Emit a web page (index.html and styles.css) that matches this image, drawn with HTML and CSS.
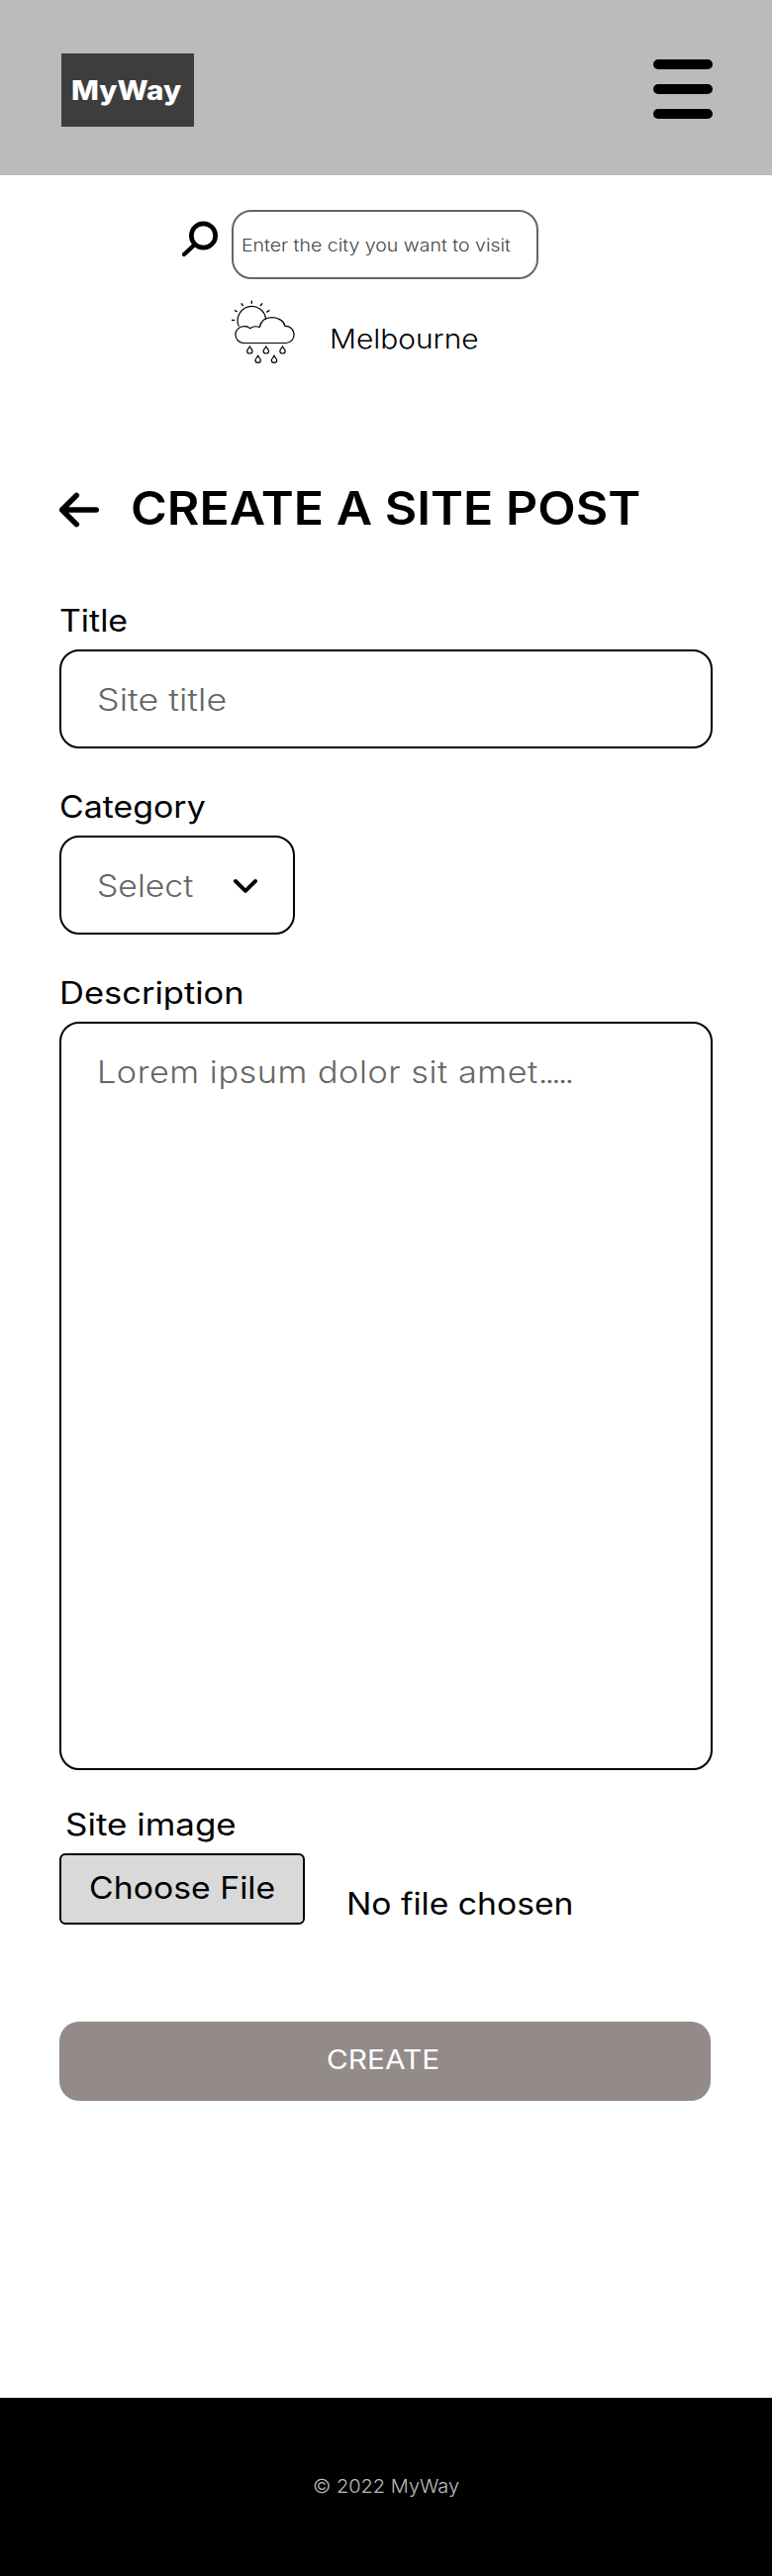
FILE: index.html
```html
<!DOCTYPE html>
<html lang="en">
<head>
<meta charset="utf-8">
<title>MyWay – Create a site post</title>
<link rel="stylesheet" href="styles.css">
</head>
<body>
<header class="header">
  <a class="logo"><span class="wide logo-text">MyWay</span></a>
  <div class="burger"><span></span><span></span><span></span></div>
</header>
<main class="main">
  <section class="search">
    <svg class="search-icon" viewBox="42 69 108 111" fill="none" stroke="#000">
      <circle cx="106.500" cy="114" r="36.500" stroke-width="14"/>
      <path d="M80 141L48 171" stroke-width="13" stroke-linecap="round"/>
    </svg>
    <div class="search-box"><span class="wide search-text">Enter the city you want to visit</span></div>
  </section>
  <section class="weather">
    <svg class="weather-icon" viewBox="192 309 195 195" fill="none" stroke="#000" stroke-width="3.600">
      <path d="M214 389A43 43 0 1 1 296 367"/>
      <path stroke-width="4.200" d="M192 370h9M201 340l8 5M221 319l6 8M253 311v9M285 319l-6 8M307 340l-9 6"/>
      <path d="M229 439.500A25 25 0 0 1 229 389Q239 387 248 395Q260 386 277 391C281 373 295 362 315 362C334 362 351 373 354 388A25.500 25.500 0 0 1 357 439.500Z"/>
      <path id="drop" d="M247 450C243 457 239 460 239 464A8 7 0 0 0 255 464C255 460 251 457 247 450Z"/>
      <use href="#drop" x="49.500"/>
      <use href="#drop" x="99.500"/>
      <use href="#drop" x="25" y="28"/>
      <use href="#drop" x="74" y="28"/>
    </svg>
    <span class="wide city">Melbourne</span>
  </section>
  <div class="heading">
    <svg class="back" viewBox="60 111 120 108" fill="none" stroke="#000" stroke-width="16.500" stroke-linecap="round" stroke-linejoin="round">
      <path d="M172 165H68M112 121L68 165L112 209"/>
    </svg>
    <h1 class="wide title">CREATE A SITE POST</h1>
  </div>
  <form class="form">
    <div class="field">
      <label class="label"><span class="wide label-title">Title</span></label>
      <div class="box"><span class="wide hint hint-title">Site title</span></div>
    </div>
    <div class="field">
      <label class="label"><span class="wide label-category">Category</span></label>
      <div class="box box-select">
        <span class="wide hint hint-select">Select</span>
        <svg class="chevron" viewBox="585 321 78 48" fill="none" stroke="#000" stroke-width="12" stroke-linecap="round" stroke-linejoin="round"><path d="M594 330L624 359.500L654 330"/></svg>
      </div>
    </div>
    <div class="field field-description">
      <label class="label"><span class="wide label-description">Description</span></label>
      <div class="box box-area"><span class="wide hint hint-area">Lorem ipsum dolor sit amet<span class="dots">.....</span></span></div>
    </div>
    <div class="field field-image">
      <label class="label label-image"><span class="wide label-image-text">Site image</span></label>
      <div class="file">
        <span class="file-button"><span class="wide file-button-text">Choose File</span></span>
        <span class="wide file-name">No file chosen</span>
      </div>
    </div>
    <div class="submit"><span class="wide submit-text">CREATE</span></div>
  </form>
</main>
<footer class="footer"><span class="wide footer-text">© 2022 MyWay</span></footer>
</body>
</html>
```
FILE: styles.css
```css
* { box-sizing: border-box; }

body {
  margin: 0;
  min-height: 2602px;
  display: flex;
  flex-direction: column;
  background: #fff;
  color: #000;
  font-family: Inter, "Liberation Sans", sans-serif;
  white-space: nowrap;
}

svg { display: block; flex: none; }

/* Extended letterforms: each text sets its own horizontal stretch */
.wide {
  display: inline-block;
  vertical-align: top;
  transform: scaleX(var(--stretch, 1.08));
  transform-origin: 0 50%;
}

.header {
  height: 177px;
  padding: 54px 60px 0 62px;
  display: flex;
  justify-content: space-between;
  align-items: flex-start;
  background: #bbb;
}

.logo {
  width: 134px;
  height: 74px;
  padding: 18px 0 0 10px;
  background: #3d3d3d;
  color: #fff;
  font-size: 27px;
  font-weight: 800;
  line-height: 40px;
}

.logo-text { --stretch: 1.095; }

.burger {
  display: flex;
  flex-direction: column;
  gap: 15px;
  padding-top: 6px;
}

.burger span {
  width: 60px;
  height: 10px;
  border-radius: 5px;
  background: #000;
}

.main { flex: 1; }

.search {
  display: flex;
  gap: 14px;
  padding: 35px 0 0 184px;
}

.search-icon { width: 36px; height: 37px; margin-top: 11px; }

.search-box {
  width: 310px;
  height: 70px;
  padding: 19px 0 0 8px;
  border: 2px solid #666;
  border-radius: 20px;
  line-height: 30px;
}

.search-text {
  --stretch: 1.13;
  color: #444;
  font-size: 17.3px;
  font-weight: 300;
}

.weather {
  display: flex;
  gap: 34px;
  padding: 21px 0 0 234px;
}

.weather-icon { width: 65px; height: 65px; }

.city {
  --stretch: 1.108;
  padding-top: 20px;
  font-size: 27px;
  font-weight: 350;
  line-height: 40px;
}

.heading {
  display: flex;
  gap: 32px;
  margin-top: 115px;
  padding-left: 60px;
}

.back { width: 40px; height: 36px; margin-top: 14px; }

.title {
  --stretch: 1.083;
  margin: 0;
  font-size: 46.2px;
  font-weight: 600;
  line-height: 60px;
}

.form {
  width: 660px;
  margin: 64px 0 0 60px;
}

.field { margin-bottom: 39px; }
.field-description { margin-bottom: 35px; }
.field-image { margin-bottom: 0; }

.label {
  display: block;
  height: 49px;
  font-size: 30.8px;
  font-weight: 440;
  line-height: 40px;
}

.label-image { padding-left: 6px; }

.label-title { --stretch: 1.1; }
.label-category { --stretch: 1.1; }
.label-description { --stretch: 1.12; }
.label-image-text { --stretch: 1.135; }

.box {
  height: 100px;
  display: flex;
  align-items: center;
  padding-left: 36px;
  border: 2px solid #000;
  border-radius: 20px;
}

.box-select { width: 238px; }

.box-area {
  height: 756px;
  align-items: flex-start;
  padding-top: 29px;
}

.hint {
  color: #666;
  font-size: 30.8px;
  font-weight: 300;
  line-height: 40px;
}

.hint-title { --stretch: 1.164; padding-top: 1px; }
.hint-select { --stretch: 1.096; width: 137px; padding-top: 1px; }
.hint-area { --stretch: 1.11; letter-spacing: 0.5px; }

.dots { letter-spacing: -2.7px; }

.chevron { width: 26px; height: 16px; margin-top: 2px; }

.file { display: flex; gap: 42px; }

.file-button,
.file-name {
  font-size: 30.8px;
  font-weight: 440;
  line-height: 40px;
}

.file-button {
  width: 248px;
  height: 72px;
  padding: 13px 0 0 28px;
  border: 2px solid #000;
  border-radius: 6px;
  background: #d9d9d9;
}

.file-button-text { --stretch: 1.097; }

.file-name { --stretch: 1.093; padding-top: 31px; }

.submit {
  width: 658px;
  height: 80px;
  margin-top: 98px;
  padding: 19px 0 0 270px;
  border-radius: 20px;
  background: #938a8a;
  color: #fff;
  font-size: 27px;
  font-weight: 440;
  line-height: 40px;
}

.submit-text { --stretch: 1.105; }

.footer {
  height: 180px;
  padding: 74px 0 0 316px;
  background: #000;
  color: #bbb;
  font-size: 19.25px;
  font-weight: 300;
  line-height: 30px;
}

.footer-text { --stretch: 1.04; }
```
